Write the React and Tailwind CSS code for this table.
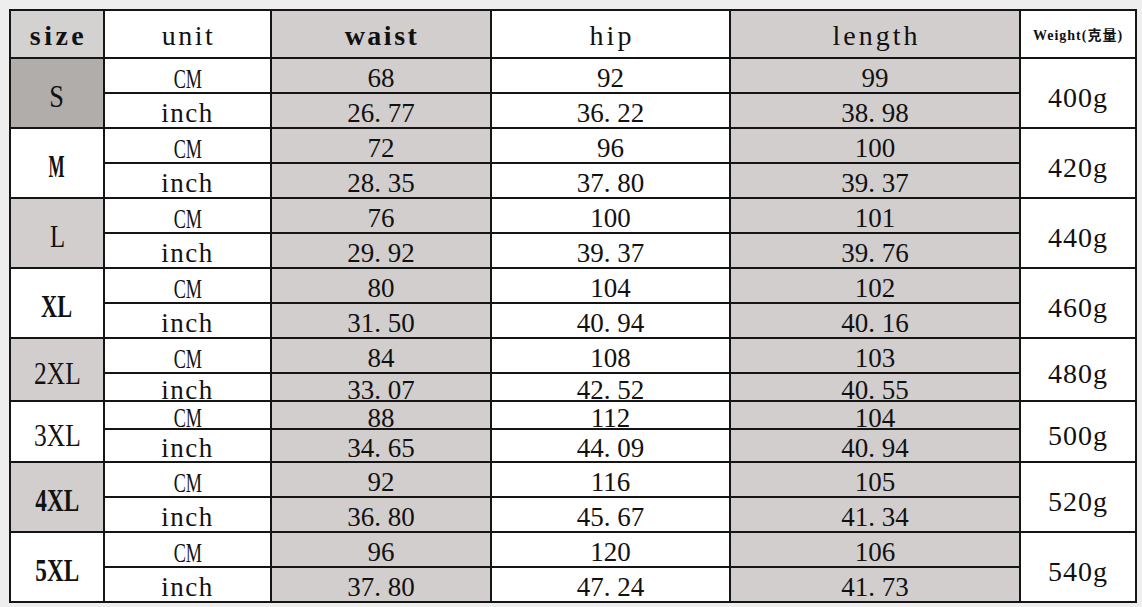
import React from 'react';

const GRAY = 'bg-[#d1cecd]';

const rows = [
  { size: 'S', bg: 'bg-[#b0adab]', label: 'font-normal scale-x-85', cm: ['68', '92', '99'], inch: ['26. 77', '36. 22', '38. 98'], weight: '400g' },
  { size: 'M', bg: 'bg-white', label: 'font-bold scale-x-55', cm: ['72', '96', '100'], inch: ['28. 35', '37. 80', '39. 37'], weight: '420g' },
  { size: 'L', bg: GRAY, label: 'font-normal scale-x-80', cm: ['76', '100', '101'], inch: ['29. 92', '39. 37', '39. 76'], weight: '440g' },
  { size: 'XL', bg: 'bg-white', label: 'font-bold scale-x-72', cm: ['80', '104', '102'], inch: ['31. 50', '40. 94', '40. 16'], weight: '460g' },
  { size: '2XL', bg: GRAY, label: 'font-normal scale-x-82', cm: ['84', '108', '103'], inch: ['33. 07', '42. 52', '40. 55'], weight: '480g' },
  { size: '3XL', bg: 'bg-white', label: 'font-normal scale-x-82', cm: ['88', '112', '104'], inch: ['34. 65', '44. 09', '40. 94'], weight: '500g' },
  { size: '4XL', bg: GRAY, label: 'font-bold scale-x-75', cm: ['92', '116', '105'], inch: ['36. 80', '45. 67', '41. 34'], weight: '520g' },
  { size: '5XL', bg: 'bg-white', label: 'font-bold scale-x-75', cm: ['96', '120', '106'], inch: ['37. 80', '47. 24', '41. 73'], weight: '540g' },
];

const colBg = [GRAY, 'bg-white', GRAY];

function Cell({ className = '', children }) {
  return (
    <div className={`flex items-center justify-center overflow-visible whitespace-nowrap pt-[6px] ${className}`}>
      {children}
    </div>
  );
}

export default function App() {
  return (
    <div className="w-[1142px] h-[607px] overflow-hidden bg-[#eeeeee] pt-[9px] pl-[9px] text-[#111] font-['Liberation_Serif','Noto_Sans_CJK_SC',serif]">
      <div className="inline-grid grid-cols-[92px_165px_218px_237px_288px_114px] grid-rows-[46px_33px_33px_33px_33px_33px_33px_33px_33px_33px_26px_26px_31px_33px_33px_33px_33px] gap-[2px] p-[2px] bg-[#151515] leading-none">
        {/* header */}
        <div className="flex items-center justify-center pt-[4px] bg-[#d3d2d1] text-[28px] font-bold tracking-[3.5px] pl-[3px]">size</div>
        <div className="flex items-center justify-center pt-[4px] bg-white text-[28px] tracking-[2.5px] pl-[2px]">unit</div>
        <div className="flex items-center justify-center pt-[4px] bg-[#d1cecd] text-[28px] font-bold tracking-[2.5px] pl-[2px]">waist</div>
        <div className="flex items-center justify-center pt-[4px] bg-white text-[28px] tracking-[3px] pl-[3px]">hip</div>
        <div className="flex items-center justify-center pt-[4px] bg-[#d1cecd] text-[28px] tracking-[3px] pl-[3px]">length</div>
        <div className="flex items-center justify-center pt-[3px] bg-white text-[14px] font-bold tracking-[1px]">
          Weight(克量)
        </div>

        {rows.map((r) => (
          <React.Fragment key={r.size}>
            <div className={`row-span-2 flex items-center justify-center pt-[7px] text-[31px] ${r.bg}`}>
              <span className={`inline-block ${r.label}`}>{r.size}</span>
            </div>
            <Cell className="bg-white text-[28px]">
              <span className="inline-block scale-x-65">CM</span>
            </Cell>
            {r.cm.map((v, i) => (
              <Cell key={i} className={`text-[27px] ${colBg[i]}`}>{v}</Cell>
            ))}
            <div className="row-span-2 flex items-center justify-center pt-[9px] bg-white text-[28px] tracking-[1px]">
              {r.weight}
            </div>
            <Cell className="bg-white text-[27px] tracking-[1.5px]">inch</Cell>
            {r.inch.map((v, i) => (
              <Cell key={i} className={`text-[27px] ${colBg[i]}`}>{v}</Cell>
            ))}
          </React.Fragment>
        ))}
      </div>
    </div>
  );
}
